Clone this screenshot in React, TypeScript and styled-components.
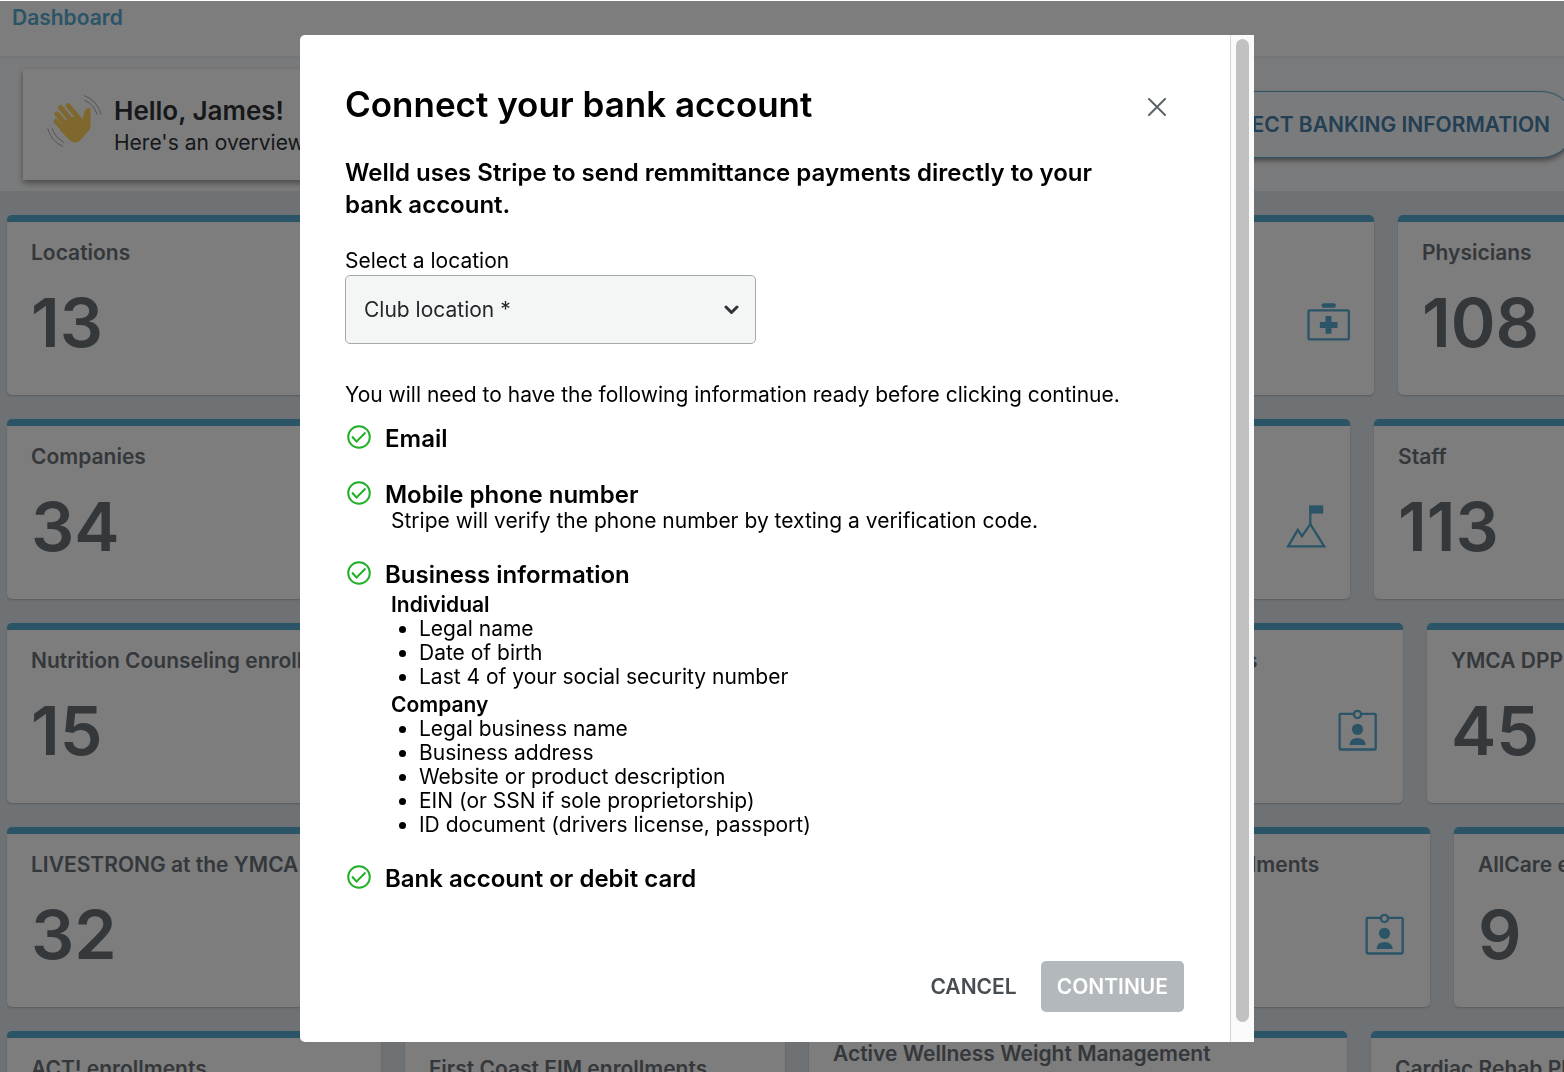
import React from "react";
import styled, { createGlobalStyle } from "styled-components";

const GlobalStyle = createGlobalStyle`
  *, *::before, *::after { box-sizing: border-box; }
  html, body, #root { height: 100%; }
  body {
    margin: 0;
    overflow: hidden;
    font-family: Inter, "Open Sans", "Liberation Sans", sans-serif;
    font-size: 21px;
    color: #000;
  }
  h1, h2, h3, h4, p, ul { margin: 0; padding: 0; }
  button, select { font: inherit; }
`;

const Page = styled.div`
  height: 100%;
  display: flex;
  flex-direction: column;
  overflow: hidden;
  background: #dde4e8;
`;

const TopBar = styled.nav`
  flex: none;
  height: 59px;
  padding: 4px 12px;
  background: #fafbfd;
  border-bottom: 3px solid #ebedee;
`;

const TopLink = styled.a`
  color: #56a8ce;
  font-weight: 600;
  line-height: 28px;
  text-decoration: none;
`;

const Hero = styled.header`
  flex: none;
  display: flex;
  align-items: center;
  justify-content: space-between;
  gap: 24px;
  height: 132px;
  padding: 10px 0 11px 23px;
  overflow: hidden;
  background: #f5f6f8;
`;

const Greeting = styled.section`
  display: flex;
  align-items: center;
  gap: 12px;
  width: 50%;
  height: 111px;
  padding: 0 24px;
  background: #fafbfd;
  box-shadow: 0 3px 6px rgba(0, 0, 0, 0.4);
`;

const GreetingTitle = styled.h1`
  font-size: 26px;
  font-weight: 600;
  line-height: 36px;
  color: #2c3034;
`;

const GreetingText = styled.p`
  line-height: 28px;
  color: #2c3034;
`;

const BankButton = styled.button`
  height: 67px;
  margin-right: -11px;
  padding: 0 24px;
  border: 1px solid #56a8ce;
  border-radius: 34px;
  background: #f5f6f8;
  box-shadow: 0 3px 5px rgba(0, 0, 0, 0.4);
  color: #467ea8;
  font-weight: 600;
  white-space: nowrap;
`;

const Rows = styled.main`
  flex: none;
  display: flex;
  flex-direction: column;
  gap: 24px;
  padding: 24px 0 0 7px;
`;

const Row = styled.div`
  display: flex;
  gap: 24px;
`;

const CardBox = styled.article<{ $width?: number; $bleed?: boolean }>`
  flex: ${(p) => (p.$width ? `0 0 ${p.$width}px` : "1 1 0")};
  min-width: 0;
  height: 180px;
  padding: 0 ${(p) => (p.$bleed ? 0 : 24)}px 0 24px;
  overflow: hidden;
  border-top: 7px solid #56a8ce;
  border-radius: ${(p) => (p.$bleed ? "5px 0 0 5px" : "5px")};
  background: #fafbfd;
  box-shadow: 0 1px 2px rgba(0, 0, 0, 0.2);
`;

const CardTitle = styled.h2<{ $wrap?: boolean }>`
  display: flex;
  align-items: center;
  height: 62px;
  font-size: 21px;
  font-weight: 600;
  line-height: 30px;
  color: #6a7076;
  white-space: ${(p) => (p.$wrap ? "normal" : "nowrap")};
`;

const CardBody = styled.div`
  display: flex;
  align-items: center;
  justify-content: space-between;
  height: 76px;
`;

const CardValue = styled.strong`
  font-size: 68px;
  font-weight: 600;
  line-height: 76px;
  color: #6a7076;
`;

const Overlay = styled.div`
  position: fixed;
  inset: 0;
  display: flex;
  align-items: flex-start;
  justify-content: center;
  padding: 34px 10px 0 0;
  border-top: 1px solid #fff;
  background: rgba(0, 0, 0, 0.5);
`;

const Dialog = styled.div`
  display: flex;
  width: 61vw;
  max-height: 100%;
  overflow: hidden;
  border-radius: 5px 0 0 5px;
  background: #fff;
`;

const DialogContent = styled.div`
  flex: 1;
  min-width: 0;
  padding: 47px 46px 30px 45px;
`;

const ScrollTrack = styled.div`
  display: flex;
  width: 24px;
  padding: 4px 5px 20px 5px;
  border-left: 1px solid #d8d8d8;
  background: #fafafa;
`;

const ScrollThumb = styled.div`
  flex: 1;
  border-radius: 7px;
  background: #c1c1c1;
`;

const DialogHeader = styled.div`
  display: flex;
  align-items: center;
  justify-content: space-between;
`;

const DialogTitle = styled.h2`
  font-size: 35px;
  font-weight: 600;
  line-height: 44px;
`;

const CloseButton = styled.button`
  display: grid;
  place-items: center;
  width: 54px;
  height: 44px;
  padding: 6px 0 0;
  border: 0;
  background: none;
  color: #5c6468;
`;

const Lead = styled.p`
  max-width: 780px;
  margin: 31px 0 26px;
  font-size: 24px;
  font-weight: 600;
  line-height: 32px;
`;

const FieldLabel = styled.label`
  display: block;
  line-height: 28px;
`;

const SelectWrap = styled.div`
  display: flex;
  align-items: center;
  position: relative;
  width: 411px;
  max-width: 100%;
`;

const Select = styled.select`
  appearance: none;
  width: 100%;
  height: 69px;
  padding: 0 48px 0 18px;
  border: 1px solid #a3aaae;
  border-radius: 5px;
  background: #f4f6f6;
  color: #24282a;
`;

const SelectArrow = styled.svg`
  position: absolute;
  right: 17px;
  pointer-events: none;
`;

const Note = styled.p`
  margin: 39px 0 18px;
  line-height: 24px;
`;

const Checklist = styled.div`
  display: flex;
  flex-direction: column;
  gap: 28px;
  padding-left: 2px;
`;

const CheckItem = styled.section`
  display: flex;
  align-items: flex-start;
  gap: 14px;
`;

const CheckTitle = styled.h3`
  font-size: 24px;
  font-weight: 600;
  line-height: 28px;
`;

const CheckDetail = styled.div`
  padding-left: 6px;
  line-height: 24px;
`;

const GroupTitle = styled.h4`
  padding-top: 4px;
  font-size: 21px;
  font-weight: 600;
  line-height: 24px;
`;

const Bullets = styled.ul`
  padding-left: 28px;
`;

const Actions = styled.div`
  display: flex;
  justify-content: flex-end;
  gap: 8px;
  margin-top: 68px;
`;

const ActionButton = styled.button<{ $filled?: boolean }>`
  height: 51px;
  padding: 0 16px;
  border: 0;
  border-radius: 5px;
  background: ${(p) => (p.$filled ? "#b2b8bb" : "transparent")};
  color: ${(p) => (p.$filled ? "#fff" : "#484d54")};
  font-weight: 600;
`;

const blue = "#56a8ce";

function WavingHand() {
  return (
    <svg width="55" height="60" viewBox="140 284 164 180" fill="none" strokeLinecap="round" aria-hidden="true">
      <g stroke="#ffd15c" strokeWidth="15">
        <path d="M203 316L240 360" />
        <path d="M180 321L222 372" />
        <path d="M169 341L212 390" />
        <path d="M166 363L202 400" />
      </g>
      <path d="M202 352L232 346L246 358L252 332Q256 322 270 323L270 380Q270 388 263 393L240 419Q225 434 208 420L178 390Z" fill="#ffd15c" />
      <g stroke="#a8aaad" strokeWidth="3">
        <path d="M252 286Q290 300 302 342" />
        <path d="M253 300Q280 312 290 342" />
        <path d="M142 385Q152 422 186 438" />
        <path d="M155 385Q164 412 190 426" />
      </g>
    </svg>
  );
}

function MedkitIcon() {
  return (
    <svg width="43" height="38" viewBox="233 308 128 114" fill="none" aria-hidden="true">
      <rect x="237" y="330" width="121" height="87" rx="3" stroke={blue} strokeWidth="7" />
      <rect x="276" y="309" width="43" height="13" rx="6" fill={blue} />
      <path d="M297 347V400M271 374H324" stroke={blue} strokeWidth="18" />
    </svg>
  );
}

function SummitIcon() {
  return (
    <svg width="40" height="43" viewBox="166 282 120 130" fill="none" aria-hidden="true">
      <path d="M172 407L201 357L214 376L239 340L281 407Z" stroke={blue} strokeWidth="7" />
      <path d="M239 284V342" stroke={blue} strokeWidth="7" />
      <rect x="236" y="283" width="42" height="25" fill={blue} />
    </svg>
  );
}

function BadgeIcon() {
  return (
    <svg width="43" height="42" viewBox="315 298 130 126" fill="none" aria-hidden="true">
      <rect x="326" y="312" width="109" height="108" rx="3" stroke={blue} strokeWidth="7" />
      <circle cx="380" cy="314" r="11" fill="#fafbfd" stroke={blue} strokeWidth="7" />
      <circle cx="380" cy="359" r="17" fill={blue} />
      <path d="M356 406Q357 385 380 385Q403 385 405 406Z" fill={blue} />
    </svg>
  );
}

function CheckIcon() {
  return (
    <svg width="24" height="24" viewBox="0 0 24 24" fill="none" stroke="#22b02b" strokeWidth="2" aria-hidden="true">
      <circle cx="12" cy="12" r="10.800" />
      <path d="M5 11.500L9.500 16.500L18.500 7.500" />
    </svg>
  );
}

type CardData = {
  title: string;
  value?: string;
  icon?: React.ReactNode;
  width?: number;
  bleed?: boolean;
  wrap?: boolean;
};

const rows: CardData[][] = [
  [
    { title: "Locations", value: "13" },
    { title: "Clinics", value: "21", icon: <MedkitIcon />, width: 360 },
    { title: "Physicians", value: "108", width: 166, bleed: true },
  ],
  [
    { title: "Companies", value: "34" },
    { title: "Programs", value: "12", icon: <SummitIcon />, width: 360 },
    { title: "Staff", value: "113", width: 190, bleed: true },
  ],
  [
    { title: "Nutrition Counseling enrollments", value: "15" },
    { title: "Diabetes enrollments", value: "18", icon: <BadgeIcon />, width: 384 },
    { title: "YMCA DPP", value: "45", width: 137, bleed: true },
  ],
  [
    { title: "LIVESTRONG at the YMCA", value: "32" },
    { title: "Wellness enrollments", value: "27", icon: <BadgeIcon />, width: 352 },
    { title: "AllCare enrollments", value: "9", width: 110, bleed: true },
  ],
  [
    { title: "ACT! enrollments", width: 374 },
    { title: "First Coast EIM enrollments", width: 380 },
    { title: "Active Wellness Weight Management Programming enrollments", wrap: true },
    { title: "Cardiac Rehab Phase III", width: 193, bleed: true },
  ],
];

function Card({ title, value, icon, width, bleed, wrap }: CardData) {
  return (
    <CardBox $width={width} $bleed={bleed}>
      <CardTitle $wrap={wrap}>{title}</CardTitle>
      <CardBody>
        {value && <CardValue>{value}</CardValue>}
        {icon}
      </CardBody>
    </CardBox>
  );
}

function ConnectDialog() {
  return (
    <Overlay>
      <Dialog role="dialog" aria-modal="true" aria-labelledby="dialog-title">
        <DialogContent>
          <DialogHeader>
            <DialogTitle id="dialog-title">Connect your bank account</DialogTitle>
            <CloseButton type="button" aria-label="Close">
              <svg width="18" height="18" viewBox="0 0 18 18" stroke="currentColor" strokeWidth="2" strokeLinecap="round">
                <path d="M1 1L17 17M17 1L1 17" />
              </svg>
            </CloseButton>
          </DialogHeader>
          <Lead>Welld uses Stripe to send remmittance payments directly to your bank account.</Lead>
          <FieldLabel htmlFor="location">Select a location</FieldLabel>
          <SelectWrap>
            <Select id="location" defaultValue="">
              <option value="">Club location *</option>
            </Select>
            <SelectArrow width="15" height="10" viewBox="0 0 15 10" fill="none" stroke="#303438" strokeWidth="3" strokeLinecap="round" strokeLinejoin="round" aria-hidden="true">
              <path d="M2 2L7.500 7.500L13 2" />
            </SelectArrow>
          </SelectWrap>
          <Note>You will need to have the following information ready before clicking continue.</Note>
          <Checklist>
            <CheckItem>
              <CheckIcon />
              <CheckTitle>Email</CheckTitle>
            </CheckItem>
            <CheckItem>
              <CheckIcon />
              <div>
                <CheckTitle>Mobile phone number</CheckTitle>
                <CheckDetail>Stripe will verify the phone number by texting a verification code.</CheckDetail>
              </div>
            </CheckItem>
            <CheckItem>
              <CheckIcon />
              <div>
                <CheckTitle>Business information</CheckTitle>
                <CheckDetail>
                  <GroupTitle>Individual</GroupTitle>
                  <Bullets>
                    <li>Legal name</li>
                    <li>Date of birth</li>
                    <li>Last 4 of your social security number</li>
                  </Bullets>
                  <GroupTitle>Company</GroupTitle>
                  <Bullets>
                    <li>Legal business name</li>
                    <li>Business address</li>
                    <li>Website or product description</li>
                    <li>EIN (or SSN if sole proprietorship)</li>
                    <li>ID document (drivers license, passport)</li>
                  </Bullets>
                </CheckDetail>
              </div>
            </CheckItem>
            <CheckItem>
              <CheckIcon />
              <CheckTitle>Bank account or debit card</CheckTitle>
            </CheckItem>
          </Checklist>
          <Actions>
            <ActionButton type="button">CANCEL</ActionButton>
            <ActionButton type="button" $filled>CONTINUE</ActionButton>
          </Actions>
        </DialogContent>
        <ScrollTrack>
          <ScrollThumb />
        </ScrollTrack>
      </Dialog>
    </Overlay>
  );
}

export default function App() {
  return (
    <>
      <GlobalStyle />
      <Page>
        <TopBar>
          <TopLink href="#dashboard">Dashboard</TopLink>
        </TopBar>
        <Hero>
          <Greeting>
            <WavingHand />
            <div>
              <GreetingTitle>Hello, James!</GreetingTitle>
              <GreetingText>Here's an overview of your account</GreetingText>
            </div>
          </Greeting>
          <BankButton type="button">CONNECT BANKING INFORMATION</BankButton>
        </Hero>
        <Rows>
          {rows.map((cards, i) => (
            <Row key={i}>
              {cards.map((card) => (
                <Card key={card.title} {...card} />
              ))}
            </Row>
          ))}
        </Rows>
      </Page>
      <ConnectDialog />
    </>
  );
}
